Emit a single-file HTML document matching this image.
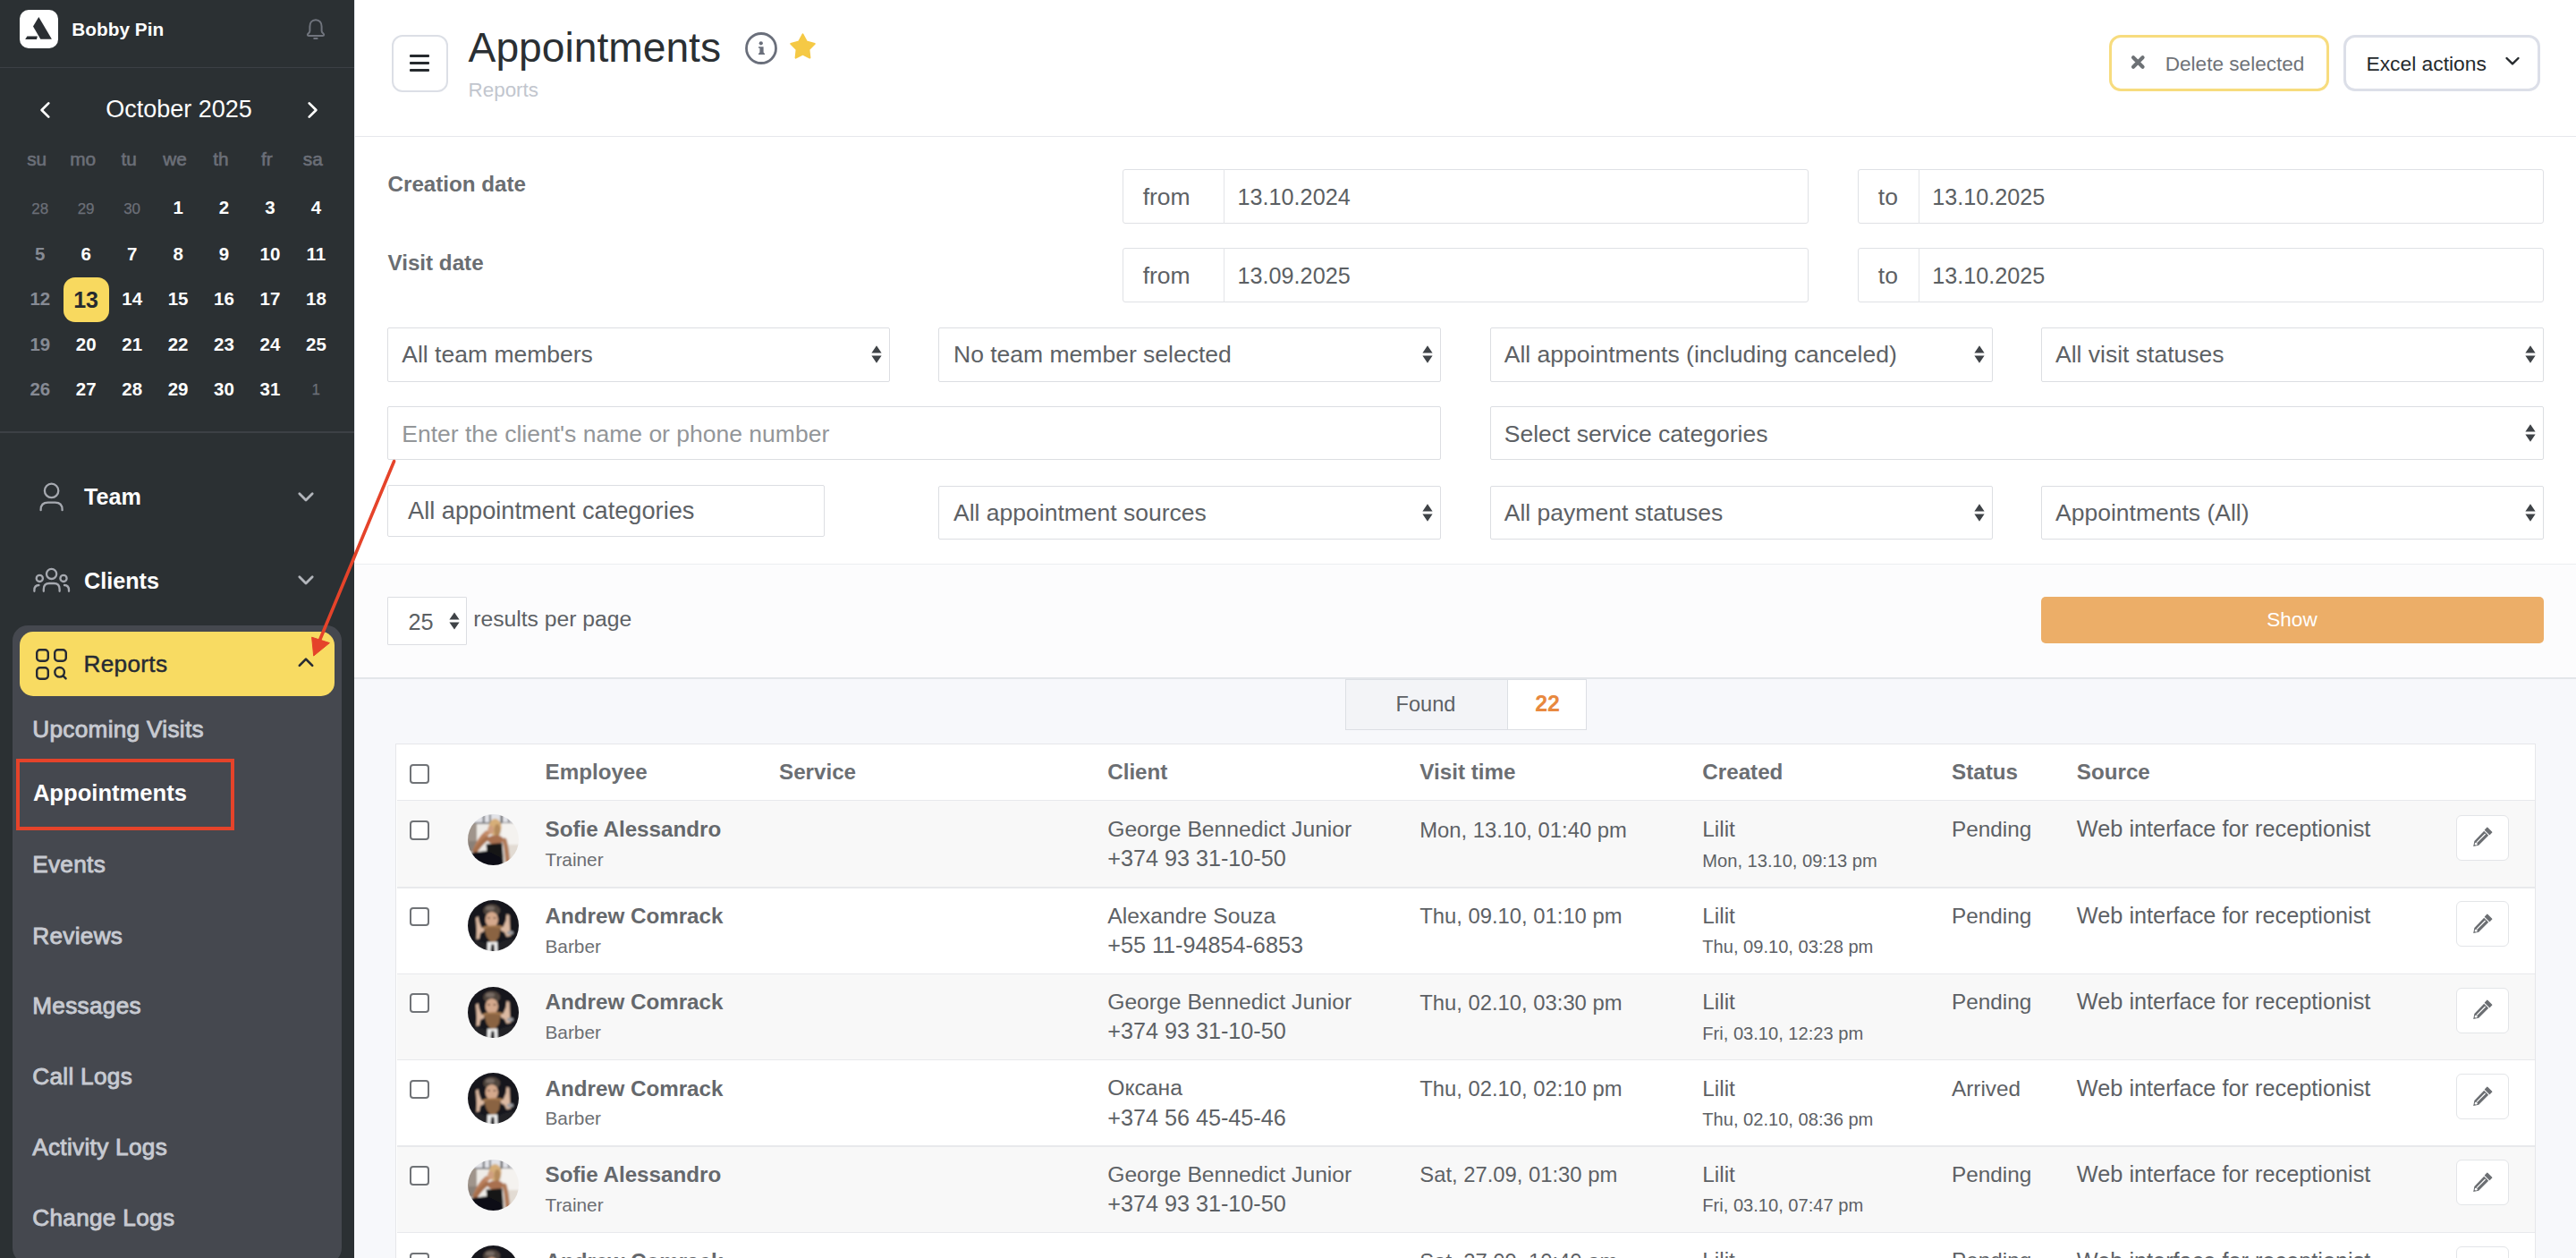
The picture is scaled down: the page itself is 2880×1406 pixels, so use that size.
<!DOCTYPE html>
<html><head><meta charset="utf-8"><title>Appointments</title>
<style>
html,body{margin:0;padding:0;width:2880px;height:1406px;overflow:hidden;background:#fff;}
body{position:relative;font-family:"Liberation Sans",sans-serif;}
.t{position:absolute;line-height:1;white-space:nowrap;}
.b{position:absolute;}

</style></head><body>
<div class="b" style="left:0.0px;top:0.0px;width:396.0px;height:1406.0px;background:#2b3033;"></div>
<div class="b" style="left:22.0px;top:11.0px;width:43.0px;height:43.0px;background:#fff;border-radius:10px;"></div>
<svg class="b" style="left:22px;top:11px" width="43" height="43" viewBox="0 0 43 43"><path d="M21.3 7.9 L35.9 32.8 L23.3 32.8 L15 18.4 Z" fill="#2b2f33"/><path d="M6.2 33 L8.4 29.5 L19.9 29.5 L19 33 Z" fill="#2b2f33"/></svg>
<div class="t" style="left:80.3px;top:23.2px;font-size:20.8px;color:#ffffff;font-weight:700;">Bobby Pin</div>
<svg class="b" style="left:340px;top:18px" width="26" height="30" viewBox="0 0 26 30"><path d="M13 4.3 C8.6 4.3 6.4 7.6 6.4 11.6 L6.4 16.6 C6.4 18 5.6 18.8 4.6 19.6 C3.4 20.6 3.6 21.9 5.2 21.9 L20.8 21.9 C22.4 21.9 22.6 20.6 21.4 19.6 C20.4 18.8 19.6 18 19.6 16.6 L19.6 11.6 C19.6 7.6 17.4 4.3 13 4.3 Z" fill="none" stroke="#70747d" stroke-width="2"/><rect x="10.2" y="24" width="5.4" height="1.9" rx="0.9" fill="#70747d"/></svg>
<div class="b" style="left:0.0px;top:75.0px;width:396.0px;height:1.0px;background:#3c4045;"></div>
<div class="t" style="left:70.0px;width:260px;text-align:center;top:109.3px;font-size:27px;color:#ffffff;">October 2025</div>
<svg class="b" style="left:40px;top:110px" width="22" height="26" viewBox="0 0 22 26"><path d="M14.3 5.4 L6.6 13 L14.3 20.6" fill="none" stroke="#fff" stroke-width="2.7" stroke-linecap="round" stroke-linejoin="round"/></svg>
<svg class="b" style="left:338px;top:110px" width="22" height="26" viewBox="0 0 22 26"><path d="M7.7 5.4 L15.4 13 L7.7 20.6" fill="none" stroke="#fff" stroke-width="2.7" stroke-linecap="round" stroke-linejoin="round"/></svg>
<div class="t" style="left:16.2px;width:50px;text-align:center;top:168.2px;font-size:20.8px;color:#6b6f78;-webkit-text-stroke:0.6px #6b6f78;">su</div>
<div class="t" style="left:67.6px;width:50px;text-align:center;top:168.2px;font-size:20.8px;color:#6b6f78;-webkit-text-stroke:0.6px #6b6f78;">mo</div>
<div class="t" style="left:119.1px;width:50px;text-align:center;top:168.2px;font-size:20.8px;color:#6b6f78;-webkit-text-stroke:0.6px #6b6f78;">tu</div>
<div class="t" style="left:170.5px;width:50px;text-align:center;top:168.2px;font-size:20.8px;color:#6b6f78;-webkit-text-stroke:0.6px #6b6f78;">we</div>
<div class="t" style="left:221.9px;width:50px;text-align:center;top:168.2px;font-size:20.8px;color:#6b6f78;-webkit-text-stroke:0.6px #6b6f78;">th</div>
<div class="t" style="left:273.3px;width:50px;text-align:center;top:168.2px;font-size:20.8px;color:#6b6f78;-webkit-text-stroke:0.6px #6b6f78;">fr</div>
<div class="t" style="left:324.8px;width:50px;text-align:center;top:168.2px;font-size:20.8px;color:#6b6f78;-webkit-text-stroke:0.6px #6b6f78;">sa</div>
<div class="t" style="left:19.7px;width:50px;text-align:center;top:224.6px;font-size:17px;color:#6b6f78;-webkit-text-stroke:0.25px #6b6f78;">28</div>
<div class="t" style="left:71.1px;width:50px;text-align:center;top:224.6px;font-size:17px;color:#6b6f78;-webkit-text-stroke:0.25px #6b6f78;">29</div>
<div class="t" style="left:122.6px;width:50px;text-align:center;top:224.6px;font-size:17px;color:#6b6f78;-webkit-text-stroke:0.25px #6b6f78;">30</div>
<div class="t" style="left:174.1px;width:50px;text-align:center;top:222.1px;font-size:20.5px;color:#ffffff;font-weight:700;">1</div>
<div class="t" style="left:225.5px;width:50px;text-align:center;top:222.1px;font-size:20.5px;color:#ffffff;font-weight:700;">2</div>
<div class="t" style="left:276.9px;width:50px;text-align:center;top:222.1px;font-size:20.5px;color:#ffffff;font-weight:700;">3</div>
<div class="t" style="left:328.4px;width:50px;text-align:center;top:222.1px;font-size:20.5px;color:#ffffff;font-weight:700;">4</div>
<div class="t" style="left:19.8px;width:50px;text-align:center;top:273.8px;font-size:20.5px;color:#868a94;font-weight:700;">5</div>
<div class="t" style="left:71.2px;width:50px;text-align:center;top:273.8px;font-size:20.5px;color:#ffffff;font-weight:700;">6</div>
<div class="t" style="left:122.7px;width:50px;text-align:center;top:273.8px;font-size:20.5px;color:#ffffff;font-weight:700;">7</div>
<div class="t" style="left:174.1px;width:50px;text-align:center;top:273.8px;font-size:20.5px;color:#ffffff;font-weight:700;">8</div>
<div class="t" style="left:225.5px;width:50px;text-align:center;top:273.8px;font-size:20.5px;color:#ffffff;font-weight:700;">9</div>
<div class="t" style="left:276.9px;width:50px;text-align:center;top:273.8px;font-size:20.5px;color:#ffffff;font-weight:700;">10</div>
<div class="t" style="left:328.4px;width:50px;text-align:center;top:273.8px;font-size:20.5px;color:#ffffff;font-weight:700;">11</div>
<div class="t" style="left:19.8px;width:50px;text-align:center;top:323.6px;font-size:20.5px;color:#868a94;font-weight:700;">12</div>
<div class="b" style="left:71.0px;top:310.0px;width:51.0px;height:50.0px;background:#f8d95f;border-radius:13px;"></div>
<div class="t" style="left:71.1px;width:50px;text-align:center;top:322.8px;font-size:25px;color:#262a2e;font-weight:700;">13</div>
<div class="t" style="left:122.7px;width:50px;text-align:center;top:323.6px;font-size:20.5px;color:#ffffff;font-weight:700;">14</div>
<div class="t" style="left:174.1px;width:50px;text-align:center;top:323.6px;font-size:20.5px;color:#ffffff;font-weight:700;">15</div>
<div class="t" style="left:225.5px;width:50px;text-align:center;top:323.6px;font-size:20.5px;color:#ffffff;font-weight:700;">16</div>
<div class="t" style="left:276.9px;width:50px;text-align:center;top:323.6px;font-size:20.5px;color:#ffffff;font-weight:700;">17</div>
<div class="t" style="left:328.4px;width:50px;text-align:center;top:323.6px;font-size:20.5px;color:#ffffff;font-weight:700;">18</div>
<div class="t" style="left:19.8px;width:50px;text-align:center;top:374.8px;font-size:20.5px;color:#868a94;font-weight:700;">19</div>
<div class="t" style="left:71.2px;width:50px;text-align:center;top:374.8px;font-size:20.5px;color:#ffffff;font-weight:700;">20</div>
<div class="t" style="left:122.7px;width:50px;text-align:center;top:374.8px;font-size:20.5px;color:#ffffff;font-weight:700;">21</div>
<div class="t" style="left:174.1px;width:50px;text-align:center;top:374.8px;font-size:20.5px;color:#ffffff;font-weight:700;">22</div>
<div class="t" style="left:225.5px;width:50px;text-align:center;top:374.8px;font-size:20.5px;color:#ffffff;font-weight:700;">23</div>
<div class="t" style="left:276.9px;width:50px;text-align:center;top:374.8px;font-size:20.5px;color:#ffffff;font-weight:700;">24</div>
<div class="t" style="left:328.4px;width:50px;text-align:center;top:374.8px;font-size:20.5px;color:#ffffff;font-weight:700;">25</div>
<div class="t" style="left:19.8px;width:50px;text-align:center;top:424.6px;font-size:20.5px;color:#868a94;font-weight:700;">26</div>
<div class="t" style="left:71.2px;width:50px;text-align:center;top:424.6px;font-size:20.5px;color:#ffffff;font-weight:700;">27</div>
<div class="t" style="left:122.7px;width:50px;text-align:center;top:424.6px;font-size:20.5px;color:#ffffff;font-weight:700;">28</div>
<div class="t" style="left:174.1px;width:50px;text-align:center;top:424.6px;font-size:20.5px;color:#ffffff;font-weight:700;">29</div>
<div class="t" style="left:225.5px;width:50px;text-align:center;top:424.6px;font-size:20.5px;color:#ffffff;font-weight:700;">30</div>
<div class="t" style="left:276.9px;width:50px;text-align:center;top:424.6px;font-size:20.5px;color:#ffffff;font-weight:700;">31</div>
<div class="t" style="left:328.3px;width:50px;text-align:center;top:427.1px;font-size:17px;color:#6b6f78;-webkit-text-stroke:0.25px #6b6f78;">1</div>
<div class="b" style="left:0.0px;top:482.0px;width:396.0px;height:1.5px;background:#3c4045;"></div>
<svg class="b" style="left:40px;top:536px" width="36" height="38" viewBox="0 0 36 38"><circle cx="17.6" cy="12.4" r="7.7" fill="none" stroke="#a6a9b0" stroke-width="2.3"/><path d="M5.6 34.2 L5.6 33.6 C5.6 28.6 8.6 25.6 13.6 25.6 L21.6 25.6 C26.6 25.6 29.6 28.6 29.6 33.6 L29.6 34.2" fill="none" stroke="#a6a9b0" stroke-width="2.3" stroke-linecap="round"/></svg>
<div class="t" style="left:94.0px;top:542.7px;font-size:25.2px;color:#ffffff;font-weight:700;">Team</div>
<svg class="b" style="left:331px;top:547px" width="22" height="16" viewBox="0 0 22 16"><path d="M3.8 4.8 L11 12 L18.2 4.8" fill="none" stroke="#b2b5bb" stroke-width="2.8" stroke-linecap="round" stroke-linejoin="round"/></svg>
<svg class="b" style="left:34px;top:630px" width="48" height="36" viewBox="0 0 48 36"><circle cx="23.6" cy="11.4" r="5.6" fill="none" stroke="#a6a9b0" stroke-width="2.3"/><circle cx="10.3" cy="16.4" r="3.6" fill="none" stroke="#a6a9b0" stroke-width="2.3"/><circle cx="37" cy="16.4" r="3.6" fill="none" stroke="#a6a9b0" stroke-width="2.3"/><path d="M14.8 30.8 L14.8 28.6 C14.8 24.6 17 22 21 22 L26.4 22 C30.4 22 32.6 24.6 32.6 28.6 L32.6 30.8" fill="none" stroke="#a6a9b0" stroke-width="2.3" stroke-linecap="round"/><path d="M4.4 30.8 L4.4 29.4 C4.4 26.4 6 24.2 9.4 24" fill="none" stroke="#a6a9b0" stroke-width="2.3" stroke-linecap="round"/><path d="M43 30.8 L43 29.4 C43 26.4 41.4 24.2 38 24" fill="none" stroke="#a6a9b0" stroke-width="2.3" stroke-linecap="round"/></svg>
<div class="t" style="left:94.0px;top:637.3px;font-size:25.2px;color:#ffffff;font-weight:700;">Clients</div>
<svg class="b" style="left:331px;top:640px" width="22" height="16" viewBox="0 0 22 16"><path d="M3.8 4.8 L11 12 L18.2 4.8" fill="none" stroke="#b2b5bb" stroke-width="2.8" stroke-linecap="round" stroke-linejoin="round"/></svg>
<div class="b" style="left:14.0px;top:699.0px;width:368.0px;height:713.0px;background:#45484f;border-radius:17px;"></div>
<div class="b" style="left:22.0px;top:706.0px;width:352.0px;height:72.0px;background:#f8db62;border-radius:15px;"></div>
<svg class="b" style="left:36px;top:721px" width="44" height="44" viewBox="0 0 44 44"><rect x="5.2" y="5.2" width="12.6" height="12.6" rx="3.6" fill="none" stroke="#262a33" stroke-width="2.4"/><rect x="25.2" y="5.2" width="12.6" height="12.6" rx="3.6" fill="none" stroke="#262a33" stroke-width="2.4"/><rect x="5.2" y="25.2" width="12.6" height="12.6" rx="3.6" fill="none" stroke="#262a33" stroke-width="2.4"/><circle cx="30.6" cy="30.3" r="5.3" fill="none" stroke="#262a33" stroke-width="2.4"/><path d="M34.6 34.4 L37.6 37.4" stroke="#262a33" stroke-width="2.4" stroke-linecap="round"/></svg>
<div class="t" style="left:93.5px;top:729.2px;font-size:26.2px;color:#262a33;-webkit-text-stroke:0.45px #262a33;letter-spacing:0.3px;">Reports</div>
<svg class="b" style="left:331px;top:732px" width="22" height="16" viewBox="0 0 22 16"><path d="M3.8 11.8 L11 4.6 L18.2 11.8" fill="none" stroke="#262a33" stroke-width="2.6" stroke-linecap="round" stroke-linejoin="round"/></svg>
<div class="t" style="left:36.2px;top:801.5px;font-size:26.2px;color:#c7cad1;-webkit-text-stroke:0.9px #c7cad1;letter-spacing:0.3px;">Upcoming Visits</div>
<div class="t" style="left:36.9px;top:874.3px;font-size:25.6px;color:#ffffff;font-weight:700;">Appointments</div>
<div class="t" style="left:36.2px;top:952.9px;font-size:26.2px;color:#c7cad1;-webkit-text-stroke:0.9px #c7cad1;letter-spacing:0.3px;">Events</div>
<div class="t" style="left:36.2px;top:1032.5px;font-size:26.2px;color:#c7cad1;-webkit-text-stroke:0.9px #c7cad1;letter-spacing:0.3px;">Reviews</div>
<div class="t" style="left:36.2px;top:1111.4px;font-size:26.2px;color:#c7cad1;-webkit-text-stroke:0.9px #c7cad1;letter-spacing:0.3px;">Messages</div>
<div class="t" style="left:36.2px;top:1190.2px;font-size:26.2px;color:#c7cad1;-webkit-text-stroke:0.9px #c7cad1;letter-spacing:0.3px;">Call Logs</div>
<div class="t" style="left:36.2px;top:1269.2px;font-size:26.2px;color:#c7cad1;-webkit-text-stroke:0.9px #c7cad1;letter-spacing:0.3px;">Activity Logs</div>
<div class="t" style="left:36.2px;top:1347.6px;font-size:26.2px;color:#c7cad1;-webkit-text-stroke:0.9px #c7cad1;letter-spacing:0.3px;">Change Logs</div>
<div class="b" style="left:18.0px;top:848.0px;width:244.0px;height:80.0px;border:4px solid #e5432a;box-sizing:border-box;"></div>
<div class="b" style="left:396.0px;top:0.0px;width:2484.0px;height:1406.0px;background:#ffffff;"></div>
<div class="b" style="left:396.0px;top:0.0px;width:1.0px;height:1406.0px;background:#e6e8ee;"></div>
<div class="b" style="left:437.5px;top:39.0px;width:63.5px;height:63.5px;border:2px solid #dcdfe6;border-radius:12px;box-sizing:border-box;"></div>
<div class="b" style="left:457.7px;top:61.2px;width:22.6px;height:3.2px;background:#262a2e;border-radius:1px;"></div>
<div class="b" style="left:457.7px;top:69.2px;width:22.6px;height:3.2px;background:#262a2e;border-radius:1px;"></div>
<div class="b" style="left:457.7px;top:77.2px;width:22.6px;height:3.2px;background:#262a2e;border-radius:1px;"></div>
<div class="t" style="left:523.6px;top:30.3px;font-size:46.2px;color:#2a2f33;">Appointments</div>
<svg class="b" style="left:831px;top:34px" width="40" height="40" viewBox="0 0 40 40"><circle cx="20" cy="20" r="16.5" fill="none" stroke="#6a6f7b" stroke-width="2.8"/><circle cx="19.8" cy="14.3" r="2.1" fill="#6a6f7b"/><path d="M17 18.3 L22.6 18.3 L22.6 24.6 L24 26 L24 27 L17 27 L17 26 L18.4 24.6 L18.4 19.8 L17 19.8 Z" fill="#6a6f7b"/></svg>
<svg class="b" style="left:881px;top:35px" width="33" height="33" viewBox="0 0 33 33"><path d="M16.5 3.4 L20.8 11.4 L29.8 13.9 L23.4 20.4 L24.4 29.6 L16.5 25.6 L8.6 29.6 L9.6 20.4 L3.2 13.9 L12.2 11.4 Z" fill="#f5c945" stroke="#f5c945" stroke-width="2" stroke-linejoin="round"/></svg>
<div class="t" style="left:523.6px;top:89.6px;font-size:22.4px;color:#c2c6ce;">Reports</div>
<div class="b" style="left:2358.4px;top:39.2px;width:245.9px;height:63.0px;border:3px solid #f7dc7e;border-radius:13px;box-sizing:border-box;"></div>
<svg class="b" style="left:2381px;top:61px" width="19" height="19" viewBox="0 0 19 19"><path d="M4.05 3.35 L14.55 13.85 M14.55 3.35 L4.05 13.85" stroke="#6d7175" stroke-width="4.2" stroke-linecap="round"/></svg>
<div class="t" style="left:2420.7px;top:60.5px;font-size:22.6px;color:#6f7378;">Delete selected</div>
<div class="b" style="left:2620.3px;top:39.2px;width:219.5px;height:63.0px;border:3px solid #dcdfe8;border-radius:13px;box-sizing:border-box;"></div>
<div class="t" style="left:2645.5px;top:60.3px;font-size:22.8px;color:#25292c;">Excel actions</div>
<svg class="b" style="left:2799px;top:60px" width="20" height="16" viewBox="0 0 20 16"><path d="M3.5 5 L10 11.4 L16.5 5" fill="none" stroke="#25292c" stroke-width="2.4" stroke-linecap="round" stroke-linejoin="round"/></svg>
<div class="b" style="left:396.0px;top:152.0px;width:2484.0px;height:1.0px;background:#e6e8ec;"></div>
<div class="t" style="left:433.5px;top:193.7px;font-size:24.2px;color:#6a6d71;font-weight:700;">Creation date</div>
<div class="t" style="left:433.5px;top:281.5px;font-size:24.2px;color:#6a6d71;font-weight:700;">Visit date</div>
<div class="b" style="left:1255.0px;top:189.0px;width:767.0px;height:61.0px;border:1px solid #dfe1e5;border-radius:3px;box-sizing:border-box;"></div>
<div class="b" style="left:1368.0px;top:189.0px;width:1.0px;height:61.0px;background:#e3e5e8;"></div>
<div class="t" style="left:1277.7px;top:206.6px;font-size:26.5px;color:#5d6165;">from</div>
<div class="t" style="left:1383.6px;top:207.7px;font-size:25.2px;color:#5b5f63;">13.10.2024</div>
<div class="b" style="left:2076.5px;top:189.0px;width:767.5px;height:61.0px;border:1px solid #dfe1e5;border-radius:3px;box-sizing:border-box;"></div>
<div class="b" style="left:2145.0px;top:189.0px;width:1.0px;height:61.0px;background:#e3e5e8;"></div>
<div class="t" style="left:2099.8px;top:206.6px;font-size:26.5px;color:#5d6165;">to</div>
<div class="t" style="left:2160.3px;top:207.7px;font-size:25.2px;color:#5b5f63;">13.10.2025</div>
<div class="b" style="left:1255.0px;top:277.0px;width:767.0px;height:61.0px;border:1px solid #dfe1e5;border-radius:3px;box-sizing:border-box;"></div>
<div class="b" style="left:1368.0px;top:277.0px;width:1.0px;height:61.0px;background:#e3e5e8;"></div>
<div class="t" style="left:1277.7px;top:294.6px;font-size:26.5px;color:#5d6165;">from</div>
<div class="t" style="left:1383.6px;top:295.7px;font-size:25.2px;color:#5b5f63;">13.09.2025</div>
<div class="b" style="left:2076.5px;top:277.0px;width:767.5px;height:61.0px;border:1px solid #dfe1e5;border-radius:3px;box-sizing:border-box;"></div>
<div class="b" style="left:2145.0px;top:277.0px;width:1.0px;height:61.0px;background:#e3e5e8;"></div>
<div class="t" style="left:2099.8px;top:294.6px;font-size:26.5px;color:#5d6165;">to</div>
<div class="t" style="left:2160.3px;top:295.7px;font-size:25.2px;color:#5b5f63;">13.10.2025</div>
<div class="b" style="left:433.0px;top:365.5px;width:562.0px;height:61.1px;border:1px solid #dcdee2;border-radius:2px;box-sizing:border-box;"></div>
<div class="t" style="left:449.3px;top:383.3px;font-size:26.5px;color:#5d6165;">All team members</div>
<svg class="b" style="left:972.5px;top:384.1px" width="14" height="24" viewBox="0 0 14 24"><path d="M7 2.3 L12.6 10.6 L1.4 10.6 Z M7 21.7 L12.6 13.4 L1.4 13.4 Z" fill="#3f4347"/></svg>
<div class="b" style="left:1049.4px;top:365.5px;width:562.0px;height:61.1px;border:1px solid #dcdee2;border-radius:2px;box-sizing:border-box;"></div>
<div class="t" style="left:1066.0px;top:383.3px;font-size:26.5px;color:#5d6165;">No team member selected</div>
<svg class="b" style="left:1588.9px;top:384.1px" width="14" height="24" viewBox="0 0 14 24"><path d="M7 2.3 L12.6 10.6 L1.4 10.6 Z M7 21.7 L12.6 13.4 L1.4 13.4 Z" fill="#3f4347"/></svg>
<div class="b" style="left:1666.4px;top:365.5px;width:562.0px;height:61.1px;border:1px solid #dcdee2;border-radius:2px;box-sizing:border-box;"></div>
<div class="t" style="left:1681.8px;top:383.3px;font-size:26.5px;color:#5d6165;">All appointments (including canceled)</div>
<svg class="b" style="left:2205.9px;top:384.1px" width="14" height="24" viewBox="0 0 14 24"><path d="M7 2.3 L12.6 10.6 L1.4 10.6 Z M7 21.7 L12.6 13.4 L1.4 13.4 Z" fill="#3f4347"/></svg>
<div class="b" style="left:2282.4px;top:365.5px;width:562.0px;height:61.1px;border:1px solid #dcdee2;border-radius:2px;box-sizing:border-box;"></div>
<div class="t" style="left:2298.0px;top:383.3px;font-size:26.5px;color:#5d6165;">All visit statuses</div>
<svg class="b" style="left:2821.9px;top:384.1px" width="14" height="24" viewBox="0 0 14 24"><path d="M7 2.3 L12.6 10.6 L1.4 10.6 Z M7 21.7 L12.6 13.4 L1.4 13.4 Z" fill="#3f4347"/></svg>
<div class="b" style="left:433.0px;top:454.3px;width:1178.4px;height:60.2px;border:1px solid #dcdee2;border-radius:2px;box-sizing:border-box;"></div>
<div class="t" style="left:449.3px;top:472.1px;font-size:26.5px;color:#939699;">Enter the client's name or phone number</div>
<div class="b" style="left:1666.4px;top:454.3px;width:1178.0px;height:60.2px;border:1px solid #dcdee2;border-radius:2px;box-sizing:border-box;"></div>
<div class="t" style="left:1681.8px;top:472.1px;font-size:26.5px;color:#5d6165;">Select service categories</div>
<svg class="b" style="left:2821.9px;top:472.4px" width="14" height="24" viewBox="0 0 14 24"><path d="M7 2.3 L12.6 10.6 L1.4 10.6 Z M7 21.7 L12.6 13.4 L1.4 13.4 Z" fill="#3f4347"/></svg>
<div class="b" style="left:433.0px;top:542.0px;width:489.2px;height:58.0px;border:1px solid #dcdee2;border-radius:2px;box-sizing:border-box;"></div>
<div class="t" style="left:456.0px;top:557.2px;font-size:27.2px;color:#5d6165;">All appointment categories</div>
<div class="b" style="left:1049.4px;top:542.5px;width:562.0px;height:60.0px;border:1px solid #dcdee2;border-radius:2px;box-sizing:border-box;"></div>
<div class="t" style="left:1066.0px;top:560.3px;font-size:26.5px;color:#5d6165;">All appointment sources</div>
<svg class="b" style="left:1588.9px;top:560.5px" width="14" height="24" viewBox="0 0 14 24"><path d="M7 2.3 L12.6 10.6 L1.4 10.6 Z M7 21.7 L12.6 13.4 L1.4 13.4 Z" fill="#3f4347"/></svg>
<div class="b" style="left:1666.4px;top:542.5px;width:562.0px;height:60.0px;border:1px solid #dcdee2;border-radius:2px;box-sizing:border-box;"></div>
<div class="t" style="left:1681.8px;top:560.3px;font-size:26.5px;color:#5d6165;">All payment statuses</div>
<svg class="b" style="left:2205.9px;top:560.5px" width="14" height="24" viewBox="0 0 14 24"><path d="M7 2.3 L12.6 10.6 L1.4 10.6 Z M7 21.7 L12.6 13.4 L1.4 13.4 Z" fill="#3f4347"/></svg>
<div class="b" style="left:2282.4px;top:542.5px;width:562.0px;height:60.0px;border:1px solid #dcdee2;border-radius:2px;box-sizing:border-box;"></div>
<div class="t" style="left:2298.0px;top:560.3px;font-size:26.5px;color:#5d6165;">Appointments (All)</div>
<svg class="b" style="left:2821.9px;top:560.5px" width="14" height="24" viewBox="0 0 14 24"><path d="M7 2.3 L12.6 10.6 L1.4 10.6 Z M7 21.7 L12.6 13.4 L1.4 13.4 Z" fill="#3f4347"/></svg>
<div class="b" style="left:396.0px;top:630.0px;width:2484.0px;height:127.0px;background:#fcfcfd;"></div>
<div class="b" style="left:396.0px;top:629.5px;width:2484.0px;height:1.5px;background:#eceef1;"></div>
<div class="b" style="left:433.0px;top:667.0px;width:89.0px;height:54.0px;background:#fff;border:1px solid #dcdee2;border-radius:1px;box-sizing:border-box;"></div>
<div class="t" style="left:456.5px;top:682.6px;font-size:25.3px;color:#5b5f63;">25</div>
<svg class="b" style="left:501px;top:682px" width="14" height="24" viewBox="0 0 14 24"><path d="M7 2.5 L12.6 10.4 L1.4 10.4 Z M7 21.5 L12.6 13.6 L1.4 13.6 Z" fill="#3f4347"/></svg>
<div class="t" style="left:529.2px;top:679.9px;font-size:24.7px;color:#5d6165;">results per page</div>
<div class="b" style="left:2281.6px;top:667.2px;width:562.4px;height:51.6px;background:#ecae68;border-radius:5px;"></div>
<div class="t" style="left:2462.5px;width:200px;text-align:center;top:682.1px;font-size:22.6px;color:#ffffff;">Show</div>
<div class="b" style="left:396.0px;top:757.0px;width:2484.0px;height:649.0px;background:#f7f8fb;"></div>
<div class="b" style="left:396.0px;top:756.5px;width:2484.0px;height:2.0px;background:#e3e6ea;"></div>
<div class="b" style="left:1504.0px;top:759.0px;width:270.0px;height:57.0px;background:#fff;border:1px solid #dcdfe4;box-sizing:border-box;"></div>
<div class="b" style="left:1505.0px;top:760.0px;width:179.5px;height:55.0px;background:#f3f4f7;"></div>
<div class="b" style="left:1684.5px;top:760.0px;width:1.0px;height:55.0px;background:#dcdfe4;"></div>
<div class="t" style="left:1560.5px;top:776.2px;font-size:23.6px;color:#5d6165;">Found</div>
<div class="t" style="left:1716.2px;top:773.9px;font-size:25px;color:#e8893f;font-weight:700;">22</div>
<div class="b" style="left:442.4px;top:831.0px;width:2392.9px;height:575.0px;background:#fff;border:1.5px solid #e6e7ea;border-bottom:none;box-sizing:border-box;"></div>
<div class="b" style="left:458.0px;top:854.0px;width:21.5px;height:21.5px;border:2px solid #707377;border-radius:4px;box-sizing:border-box;background:#fff;"></div>
<div class="t" style="left:609.5px;top:850.7px;font-size:24.2px;color:#6b6e72;font-weight:700;">Employee</div>
<div class="t" style="left:871.0px;top:850.7px;font-size:24.2px;color:#6b6e72;font-weight:700;">Service</div>
<div class="t" style="left:1238.2px;top:850.7px;font-size:24.2px;color:#6b6e72;font-weight:700;">Client</div>
<div class="t" style="left:1587.3px;top:850.7px;font-size:24.2px;color:#6b6e72;font-weight:700;">Visit time</div>
<div class="t" style="left:1903.3px;top:850.7px;font-size:24.2px;color:#6b6e72;font-weight:700;">Created</div>
<div class="t" style="left:2182.0px;top:850.7px;font-size:24.2px;color:#6b6e72;font-weight:700;">Status</div>
<div class="t" style="left:2321.8px;top:850.7px;font-size:24.2px;color:#6b6e72;font-weight:700;">Source</div>
<div class="b" style="left:443.9px;top:893.8px;width:2389.9px;height:1.5px;background:#e8e9ec;"></div>
<div class="b" style="left:443.9px;top:895.3px;width:2389.9px;height:96.6px;background:#f8f8f8;"></div>
<div class="b" style="left:458.0px;top:917.3px;width:21.5px;height:21.5px;border:2px solid #707377;border-radius:4px;box-sizing:border-box;background:#fff;"></div>
<svg class="b" style="left:523px;top:909.8px" width="57" height="57" viewBox="0 0 57 57"><defs><clipPath id="c0"><circle cx="28.5" cy="28.5" r="28.5"/></clipPath><filter id="f0" x="-20%" y="-20%" width="140%" height="140%"><feGaussianBlur stdDeviation="0.9"/></filter></defs><g clip-path="url(#c0)"><g filter="url(#f0)"><rect x="-5" y="-5" width="67" height="67" fill="#eeebe7"/><rect x="-5" y="-5" width="67" height="15" fill="#e2e3e8"/><rect x="16.8" y="0" width="1.8" height="10" fill="#505158"/><rect x="24" y="0" width="1.6" height="10" fill="#5a5b60"/><rect x="36.8" y="0" width="2.2" height="10" fill="#3c3d42"/><rect x="45" y="0" width="1.6" height="10" fill="#6a6b70"/><rect x="-5" y="9" width="67" height="1.8" fill="#77777b"/><rect x="-5" y="10" width="15" height="28" fill="#9f948b"/><rect x="-5" y="30" width="15" height="12" fill="#8a8078"/><rect x="38" y="10" width="24" height="26" fill="#f4f2ef"/><rect x="40" y="34" width="22" height="25" fill="#e2dbd3"/><ellipse cx="30.5" cy="14.5" rx="7" ry="9.5" fill="#d6ae78"/><ellipse cx="33" cy="18" rx="3.5" ry="7" fill="#b48a5c"/><ellipse cx="25.6" cy="17.5" rx="3.4" ry="5" fill="#cf9f7f"/><path d="M8 41 C11 33 15 26 21 21" fill="none" stroke="#b97f5b" stroke-width="5" stroke-linecap="round"/><path d="M8.5 41 C12 36 16 31 21.5 27" fill="none" stroke="#a66e4c" stroke-width="5" stroke-linecap="round"/><ellipse cx="21.5" cy="21.5" rx="3" ry="2.6" fill="#c48d6a"/><ellipse cx="31" cy="28.6" rx="9" ry="5" fill="#a87050"/><path d="M41 29 C43 36 44 45 44.5 53" fill="none" stroke="#b07a58" stroke-width="5" stroke-linecap="round"/><path d="M20.6 33.4 L38.5 32.2 L39.7 49.5 L21.8 50 Z" fill="#141417"/><path d="M4 43 L21.8 41 L39.7 50 L40 60 L-2 60 Z" fill="#0f0f12"/></g></g></svg>
<div class="t" style="left:609.5px;top:915.3px;font-size:24.2px;color:#65686c;font-weight:700;">Sofie Alessandro</div>
<div class="t" style="left:609.5px;top:950.9px;font-size:20.8px;color:#6b6e72;">Trainer</div>
<div class="t" style="left:1238.2px;top:914.9px;font-size:24.7px;color:#5d6165;">George Bennedict Junior</div>
<div class="t" style="left:1238.2px;top:947.2px;font-size:25.2px;color:#5d6165;">+374 93 31-10-50</div>
<div class="t" style="left:1587.3px;top:915.6px;font-size:23.8px;color:#5d6165;">Mon, 13.10, 01:40 pm</div>
<div class="t" style="left:1903.3px;top:915.1px;font-size:24.4px;color:#5d6165;">Lilit</div>
<div class="t" style="left:1903.3px;top:951.5px;font-size:20.1px;color:#5d6165;">Mon, 13.10, 09:13 pm</div>
<div class="t" style="left:2182.0px;top:915.2px;font-size:24.3px;color:#5d6165;">Pending</div>
<div class="t" style="left:2321.8px;top:914.4px;font-size:25.3px;color:#5d6165;">Web interface for receptionist</div>
<div class="b" style="left:2745.6px;top:910.5px;width:59.7px;height:51.2px;background:#fff;border:1.5px solid #e3e5e8;border-radius:6px;box-sizing:border-box;"></div>
<svg class="b" style="left:2763px;top:922.1px" width="26" height="26" viewBox="0 0 26 26"><path d="M17.8 3.2 L22.8 8.2 L20.4 10.6 L15.4 5.6 Z" fill="#6b6e72" stroke="#6b6e72" stroke-width="1.2" stroke-linejoin="round"/><path d="M14.2 6.8 L19.2 11.8 L8.2 22.8 L2.2 24 L3.4 18 Z" fill="#6b6e72"/><path d="M6 19.6 L15.6 10" stroke="#fff" stroke-width="1.2"/><circle cx="5.2" cy="21.2" r="1.4" fill="#fff"/></svg>
<div class="b" style="left:443.9px;top:991.9px;width:2389.9px;height:96.4px;background:#ffffff;"></div>
<div class="b" style="left:458.0px;top:1013.9px;width:21.5px;height:21.5px;border:2px solid #707377;border-radius:4px;box-sizing:border-box;background:#fff;"></div>
<svg class="b" style="left:523px;top:1006.4px" width="57" height="57" viewBox="0 0 57 57"><defs><clipPath id="c1"><circle cx="28.5" cy="28.5" r="28.5"/></clipPath><filter id="f1" x="-20%" y="-20%" width="140%" height="140%"><feGaussianBlur stdDeviation="0.9"/></filter></defs><g clip-path="url(#c1)"><g filter="url(#f1)"><rect x="-5" y="-5" width="67" height="67" fill="#15161b"/><ellipse cx="26.8" cy="11.5" rx="9.5" ry="6.8" fill="#4f443c"/><ellipse cx="25" cy="9" rx="5" ry="2.6" fill="#786c64"/><ellipse cx="26.8" cy="21.8" rx="7.2" ry="8.8" fill="#d4a88c"/><ellipse cx="23.5" cy="20" rx="1.4" ry="0.8" fill="#3a2a22"/><ellipse cx="30" cy="20" rx="1.4" ry="0.8" fill="#3a2a22"/><path d="M9 20 L11.5 18 L13 25 L15.5 31 L19 31 L18 35 L14 37 L13 43 L9.5 44 L10 34 Z" fill="#dcb9a2"/><path d="M46.5 17 L43.5 15.5 L42.5 23 L39.5 30 L36 30 L37 34 L41 36 L43.5 41 L48 40 L47 31 Z" fill="#dcb9a2"/><path d="M17.8 30.5 L37 29.8 L35 41 L29.5 48.5 L27 49 L21 41 Z" fill="#8a6442"/><path d="M17 31 C22 29 32 28.6 38.5 30" fill="none" stroke="#a87a50" stroke-width="2.2"/><path d="M22 47 L33 46.5 L34 60 L21 60 Z" fill="#f0f0f0"/><path d="M26.2 49.5 L29.4 49.5 L30.4 60 L25.2 60 Z" fill="#15161b"/><path d="M-2 47 C6 44 14 44 21.5 49 L21.5 60 L-2 60 Z" fill="#202128"/><path d="M59 45 C52 42 42 43 33.5 48.5 L33.5 60 L59 60 Z" fill="#202128"/><ellipse cx="47.4" cy="36.4" rx="3.6" ry="2.2" fill="#9c9ca0"/></g></g></svg>
<div class="t" style="left:609.5px;top:1011.9px;font-size:24.2px;color:#65686c;font-weight:700;">Andrew Comrack</div>
<div class="t" style="left:609.5px;top:1047.5px;font-size:20.8px;color:#6b6e72;">Barber</div>
<div class="t" style="left:1238.2px;top:1011.5px;font-size:24.7px;color:#5d6165;">Alexandre Souza</div>
<div class="t" style="left:1238.2px;top:1043.8px;font-size:25.2px;color:#5d6165;">+55 11-94854-6853</div>
<div class="t" style="left:1587.3px;top:1012.2px;font-size:23.8px;color:#5d6165;">Thu, 09.10, 01:10 pm</div>
<div class="t" style="left:1903.3px;top:1011.7px;font-size:24.4px;color:#5d6165;">Lilit</div>
<div class="t" style="left:1903.3px;top:1048.1px;font-size:20.1px;color:#5d6165;">Thu, 09.10, 03:28 pm</div>
<div class="t" style="left:2182.0px;top:1011.8px;font-size:24.3px;color:#5d6165;">Pending</div>
<div class="t" style="left:2321.8px;top:1011.0px;font-size:25.3px;color:#5d6165;">Web interface for receptionist</div>
<div class="b" style="left:2745.6px;top:1007.1px;width:59.7px;height:51.2px;background:#fff;border:1.5px solid #e3e5e8;border-radius:6px;box-sizing:border-box;"></div>
<svg class="b" style="left:2763px;top:1018.7px" width="26" height="26" viewBox="0 0 26 26"><path d="M17.8 3.2 L22.8 8.2 L20.4 10.6 L15.4 5.6 Z" fill="#6b6e72" stroke="#6b6e72" stroke-width="1.2" stroke-linejoin="round"/><path d="M14.2 6.8 L19.2 11.8 L8.2 22.8 L2.2 24 L3.4 18 Z" fill="#6b6e72"/><path d="M6 19.6 L15.6 10" stroke="#fff" stroke-width="1.2"/><circle cx="5.2" cy="21.2" r="1.4" fill="#fff"/></svg>
<div class="b" style="left:443.9px;top:1088.3px;width:2389.9px;height:96.4px;background:#f8f8f8;"></div>
<div class="b" style="left:458.0px;top:1110.3px;width:21.5px;height:21.5px;border:2px solid #707377;border-radius:4px;box-sizing:border-box;background:#fff;"></div>
<svg class="b" style="left:523px;top:1102.8px" width="57" height="57" viewBox="0 0 57 57"><defs><clipPath id="c2"><circle cx="28.5" cy="28.5" r="28.5"/></clipPath><filter id="f2" x="-20%" y="-20%" width="140%" height="140%"><feGaussianBlur stdDeviation="0.9"/></filter></defs><g clip-path="url(#c2)"><g filter="url(#f2)"><rect x="-5" y="-5" width="67" height="67" fill="#15161b"/><ellipse cx="26.8" cy="11.5" rx="9.5" ry="6.8" fill="#4f443c"/><ellipse cx="25" cy="9" rx="5" ry="2.6" fill="#786c64"/><ellipse cx="26.8" cy="21.8" rx="7.2" ry="8.8" fill="#d4a88c"/><ellipse cx="23.5" cy="20" rx="1.4" ry="0.8" fill="#3a2a22"/><ellipse cx="30" cy="20" rx="1.4" ry="0.8" fill="#3a2a22"/><path d="M9 20 L11.5 18 L13 25 L15.5 31 L19 31 L18 35 L14 37 L13 43 L9.5 44 L10 34 Z" fill="#dcb9a2"/><path d="M46.5 17 L43.5 15.5 L42.5 23 L39.5 30 L36 30 L37 34 L41 36 L43.5 41 L48 40 L47 31 Z" fill="#dcb9a2"/><path d="M17.8 30.5 L37 29.8 L35 41 L29.5 48.5 L27 49 L21 41 Z" fill="#8a6442"/><path d="M17 31 C22 29 32 28.6 38.5 30" fill="none" stroke="#a87a50" stroke-width="2.2"/><path d="M22 47 L33 46.5 L34 60 L21 60 Z" fill="#f0f0f0"/><path d="M26.2 49.5 L29.4 49.5 L30.4 60 L25.2 60 Z" fill="#15161b"/><path d="M-2 47 C6 44 14 44 21.5 49 L21.5 60 L-2 60 Z" fill="#202128"/><path d="M59 45 C52 42 42 43 33.5 48.5 L33.5 60 L59 60 Z" fill="#202128"/><ellipse cx="47.4" cy="36.4" rx="3.6" ry="2.2" fill="#9c9ca0"/></g></g></svg>
<div class="t" style="left:609.5px;top:1108.3px;font-size:24.2px;color:#65686c;font-weight:700;">Andrew Comrack</div>
<div class="t" style="left:609.5px;top:1143.9px;font-size:20.8px;color:#6b6e72;">Barber</div>
<div class="t" style="left:1238.2px;top:1107.9px;font-size:24.7px;color:#5d6165;">George Bennedict Junior</div>
<div class="t" style="left:1238.2px;top:1140.2px;font-size:25.2px;color:#5d6165;">+374 93 31-10-50</div>
<div class="t" style="left:1587.3px;top:1108.6px;font-size:23.8px;color:#5d6165;">Thu, 02.10, 03:30 pm</div>
<div class="t" style="left:1903.3px;top:1108.1px;font-size:24.4px;color:#5d6165;">Lilit</div>
<div class="t" style="left:1903.3px;top:1144.5px;font-size:20.1px;color:#5d6165;">Fri, 03.10, 12:23 pm</div>
<div class="t" style="left:2182.0px;top:1108.2px;font-size:24.3px;color:#5d6165;">Pending</div>
<div class="t" style="left:2321.8px;top:1107.4px;font-size:25.3px;color:#5d6165;">Web interface for receptionist</div>
<div class="b" style="left:2745.6px;top:1103.5px;width:59.7px;height:51.2px;background:#fff;border:1.5px solid #e3e5e8;border-radius:6px;box-sizing:border-box;"></div>
<svg class="b" style="left:2763px;top:1115.1px" width="26" height="26" viewBox="0 0 26 26"><path d="M17.8 3.2 L22.8 8.2 L20.4 10.6 L15.4 5.6 Z" fill="#6b6e72" stroke="#6b6e72" stroke-width="1.2" stroke-linejoin="round"/><path d="M14.2 6.8 L19.2 11.8 L8.2 22.8 L2.2 24 L3.4 18 Z" fill="#6b6e72"/><path d="M6 19.6 L15.6 10" stroke="#fff" stroke-width="1.2"/><circle cx="5.2" cy="21.2" r="1.4" fill="#fff"/></svg>
<div class="b" style="left:443.9px;top:1184.7px;width:2389.9px;height:96.4px;background:#ffffff;"></div>
<div class="b" style="left:458.0px;top:1206.7px;width:21.5px;height:21.5px;border:2px solid #707377;border-radius:4px;box-sizing:border-box;background:#fff;"></div>
<svg class="b" style="left:523px;top:1199.2px" width="57" height="57" viewBox="0 0 57 57"><defs><clipPath id="c3"><circle cx="28.5" cy="28.5" r="28.5"/></clipPath><filter id="f3" x="-20%" y="-20%" width="140%" height="140%"><feGaussianBlur stdDeviation="0.9"/></filter></defs><g clip-path="url(#c3)"><g filter="url(#f3)"><rect x="-5" y="-5" width="67" height="67" fill="#15161b"/><ellipse cx="26.8" cy="11.5" rx="9.5" ry="6.8" fill="#4f443c"/><ellipse cx="25" cy="9" rx="5" ry="2.6" fill="#786c64"/><ellipse cx="26.8" cy="21.8" rx="7.2" ry="8.8" fill="#d4a88c"/><ellipse cx="23.5" cy="20" rx="1.4" ry="0.8" fill="#3a2a22"/><ellipse cx="30" cy="20" rx="1.4" ry="0.8" fill="#3a2a22"/><path d="M9 20 L11.5 18 L13 25 L15.5 31 L19 31 L18 35 L14 37 L13 43 L9.5 44 L10 34 Z" fill="#dcb9a2"/><path d="M46.5 17 L43.5 15.5 L42.5 23 L39.5 30 L36 30 L37 34 L41 36 L43.5 41 L48 40 L47 31 Z" fill="#dcb9a2"/><path d="M17.8 30.5 L37 29.8 L35 41 L29.5 48.5 L27 49 L21 41 Z" fill="#8a6442"/><path d="M17 31 C22 29 32 28.6 38.5 30" fill="none" stroke="#a87a50" stroke-width="2.2"/><path d="M22 47 L33 46.5 L34 60 L21 60 Z" fill="#f0f0f0"/><path d="M26.2 49.5 L29.4 49.5 L30.4 60 L25.2 60 Z" fill="#15161b"/><path d="M-2 47 C6 44 14 44 21.5 49 L21.5 60 L-2 60 Z" fill="#202128"/><path d="M59 45 C52 42 42 43 33.5 48.5 L33.5 60 L59 60 Z" fill="#202128"/><ellipse cx="47.4" cy="36.4" rx="3.6" ry="2.2" fill="#9c9ca0"/></g></g></svg>
<div class="t" style="left:609.5px;top:1204.7px;font-size:24.2px;color:#65686c;font-weight:700;">Andrew Comrack</div>
<div class="t" style="left:609.5px;top:1240.3px;font-size:20.8px;color:#6b6e72;">Barber</div>
<div class="t" style="left:1238.2px;top:1204.3px;font-size:24.7px;color:#5d6165;">Оксана</div>
<div class="t" style="left:1238.2px;top:1236.6px;font-size:25.2px;color:#5d6165;">+374 56 45-45-46</div>
<div class="t" style="left:1587.3px;top:1205.0px;font-size:23.8px;color:#5d6165;">Thu, 02.10, 02:10 pm</div>
<div class="t" style="left:1903.3px;top:1204.5px;font-size:24.4px;color:#5d6165;">Lilit</div>
<div class="t" style="left:1903.3px;top:1240.9px;font-size:20.1px;color:#5d6165;">Thu, 02.10, 08:36 pm</div>
<div class="t" style="left:2182.0px;top:1204.6px;font-size:24.3px;color:#5d6165;">Arrived</div>
<div class="t" style="left:2321.8px;top:1203.8px;font-size:25.3px;color:#5d6165;">Web interface for receptionist</div>
<div class="b" style="left:2745.6px;top:1199.9px;width:59.7px;height:51.2px;background:#fff;border:1.5px solid #e3e5e8;border-radius:6px;box-sizing:border-box;"></div>
<svg class="b" style="left:2763px;top:1211.5px" width="26" height="26" viewBox="0 0 26 26"><path d="M17.8 3.2 L22.8 8.2 L20.4 10.6 L15.4 5.6 Z" fill="#6b6e72" stroke="#6b6e72" stroke-width="1.2" stroke-linejoin="round"/><path d="M14.2 6.8 L19.2 11.8 L8.2 22.8 L2.2 24 L3.4 18 Z" fill="#6b6e72"/><path d="M6 19.6 L15.6 10" stroke="#fff" stroke-width="1.2"/><circle cx="5.2" cy="21.2" r="1.4" fill="#fff"/></svg>
<div class="b" style="left:443.9px;top:1281.1px;width:2389.9px;height:96.4px;background:#f8f8f8;"></div>
<div class="b" style="left:458.0px;top:1303.1px;width:21.5px;height:21.5px;border:2px solid #707377;border-radius:4px;box-sizing:border-box;background:#fff;"></div>
<svg class="b" style="left:523px;top:1295.6px" width="57" height="57" viewBox="0 0 57 57"><defs><clipPath id="c4"><circle cx="28.5" cy="28.5" r="28.5"/></clipPath><filter id="f4" x="-20%" y="-20%" width="140%" height="140%"><feGaussianBlur stdDeviation="0.9"/></filter></defs><g clip-path="url(#c4)"><g filter="url(#f4)"><rect x="-5" y="-5" width="67" height="67" fill="#eeebe7"/><rect x="-5" y="-5" width="67" height="15" fill="#e2e3e8"/><rect x="16.8" y="0" width="1.8" height="10" fill="#505158"/><rect x="24" y="0" width="1.6" height="10" fill="#5a5b60"/><rect x="36.8" y="0" width="2.2" height="10" fill="#3c3d42"/><rect x="45" y="0" width="1.6" height="10" fill="#6a6b70"/><rect x="-5" y="9" width="67" height="1.8" fill="#77777b"/><rect x="-5" y="10" width="15" height="28" fill="#9f948b"/><rect x="-5" y="30" width="15" height="12" fill="#8a8078"/><rect x="38" y="10" width="24" height="26" fill="#f4f2ef"/><rect x="40" y="34" width="22" height="25" fill="#e2dbd3"/><ellipse cx="30.5" cy="14.5" rx="7" ry="9.5" fill="#d6ae78"/><ellipse cx="33" cy="18" rx="3.5" ry="7" fill="#b48a5c"/><ellipse cx="25.6" cy="17.5" rx="3.4" ry="5" fill="#cf9f7f"/><path d="M8 41 C11 33 15 26 21 21" fill="none" stroke="#b97f5b" stroke-width="5" stroke-linecap="round"/><path d="M8.5 41 C12 36 16 31 21.5 27" fill="none" stroke="#a66e4c" stroke-width="5" stroke-linecap="round"/><ellipse cx="21.5" cy="21.5" rx="3" ry="2.6" fill="#c48d6a"/><ellipse cx="31" cy="28.6" rx="9" ry="5" fill="#a87050"/><path d="M41 29 C43 36 44 45 44.5 53" fill="none" stroke="#b07a58" stroke-width="5" stroke-linecap="round"/><path d="M20.6 33.4 L38.5 32.2 L39.7 49.5 L21.8 50 Z" fill="#141417"/><path d="M4 43 L21.8 41 L39.7 50 L40 60 L-2 60 Z" fill="#0f0f12"/></g></g></svg>
<div class="t" style="left:609.5px;top:1301.1px;font-size:24.2px;color:#65686c;font-weight:700;">Sofie Alessandro</div>
<div class="t" style="left:609.5px;top:1336.7px;font-size:20.8px;color:#6b6e72;">Trainer</div>
<div class="t" style="left:1238.2px;top:1300.7px;font-size:24.7px;color:#5d6165;">George Bennedict Junior</div>
<div class="t" style="left:1238.2px;top:1333.0px;font-size:25.2px;color:#5d6165;">+374 93 31-10-50</div>
<div class="t" style="left:1587.3px;top:1301.4px;font-size:23.8px;color:#5d6165;">Sat, 27.09, 01:30 pm</div>
<div class="t" style="left:1903.3px;top:1300.9px;font-size:24.4px;color:#5d6165;">Lilit</div>
<div class="t" style="left:1903.3px;top:1337.3px;font-size:20.1px;color:#5d6165;">Fri, 03.10, 07:47 pm</div>
<div class="t" style="left:2182.0px;top:1301.0px;font-size:24.3px;color:#5d6165;">Pending</div>
<div class="t" style="left:2321.8px;top:1300.2px;font-size:25.3px;color:#5d6165;">Web interface for receptionist</div>
<div class="b" style="left:2745.6px;top:1296.3px;width:59.7px;height:51.2px;background:#fff;border:1.5px solid #e3e5e8;border-radius:6px;box-sizing:border-box;"></div>
<svg class="b" style="left:2763px;top:1307.9px" width="26" height="26" viewBox="0 0 26 26"><path d="M17.8 3.2 L22.8 8.2 L20.4 10.6 L15.4 5.6 Z" fill="#6b6e72" stroke="#6b6e72" stroke-width="1.2" stroke-linejoin="round"/><path d="M14.2 6.8 L19.2 11.8 L8.2 22.8 L2.2 24 L3.4 18 Z" fill="#6b6e72"/><path d="M6 19.6 L15.6 10" stroke="#fff" stroke-width="1.2"/><circle cx="5.2" cy="21.2" r="1.4" fill="#fff"/></svg>
<div class="b" style="left:443.9px;top:1377.5px;width:2389.9px;height:28.5px;background:#ffffff;"></div>
<div class="b" style="left:458.0px;top:1399.5px;width:21.5px;height:21.5px;border:2px solid #707377;border-radius:4px;box-sizing:border-box;background:#fff;"></div>
<svg class="b" style="left:523px;top:1392.0px" width="57" height="57" viewBox="0 0 57 57"><defs><clipPath id="c5"><circle cx="28.5" cy="28.5" r="28.5"/></clipPath><filter id="f5" x="-20%" y="-20%" width="140%" height="140%"><feGaussianBlur stdDeviation="0.9"/></filter></defs><g clip-path="url(#c5)"><g filter="url(#f5)"><rect x="-5" y="-5" width="67" height="67" fill="#15161b"/><ellipse cx="26.8" cy="11.5" rx="9.5" ry="6.8" fill="#4f443c"/><ellipse cx="25" cy="9" rx="5" ry="2.6" fill="#786c64"/><ellipse cx="26.8" cy="21.8" rx="7.2" ry="8.8" fill="#d4a88c"/><ellipse cx="23.5" cy="20" rx="1.4" ry="0.8" fill="#3a2a22"/><ellipse cx="30" cy="20" rx="1.4" ry="0.8" fill="#3a2a22"/><path d="M9 20 L11.5 18 L13 25 L15.5 31 L19 31 L18 35 L14 37 L13 43 L9.5 44 L10 34 Z" fill="#dcb9a2"/><path d="M46.5 17 L43.5 15.5 L42.5 23 L39.5 30 L36 30 L37 34 L41 36 L43.5 41 L48 40 L47 31 Z" fill="#dcb9a2"/><path d="M17.8 30.5 L37 29.8 L35 41 L29.5 48.5 L27 49 L21 41 Z" fill="#8a6442"/><path d="M17 31 C22 29 32 28.6 38.5 30" fill="none" stroke="#a87a50" stroke-width="2.2"/><path d="M22 47 L33 46.5 L34 60 L21 60 Z" fill="#f0f0f0"/><path d="M26.2 49.5 L29.4 49.5 L30.4 60 L25.2 60 Z" fill="#15161b"/><path d="M-2 47 C6 44 14 44 21.5 49 L21.5 60 L-2 60 Z" fill="#202128"/><path d="M59 45 C52 42 42 43 33.5 48.5 L33.5 60 L59 60 Z" fill="#202128"/><ellipse cx="47.4" cy="36.4" rx="3.6" ry="2.2" fill="#9c9ca0"/></g></g></svg>
<div class="t" style="left:609.5px;top:1397.5px;font-size:24.2px;color:#65686c;font-weight:700;">Andrew Comrack</div>
<div class="t" style="left:609.5px;top:1433.1px;font-size:20.8px;color:#6b6e72;">Barber</div>
<div class="t" style="left:1587.3px;top:1397.8px;font-size:23.8px;color:#5d6165;">Sat, 27.09, 10:40 am</div>
<div class="t" style="left:1903.3px;top:1397.3px;font-size:24.4px;color:#5d6165;">Lilit</div>
<div class="t" style="left:1903.3px;top:1433.7px;font-size:20.1px;color:#5d6165;">Sat, 27.09, 10:41 am</div>
<div class="t" style="left:2182.0px;top:1397.4px;font-size:24.3px;color:#5d6165;">Pending</div>
<div class="t" style="left:2321.8px;top:1396.6px;font-size:25.3px;color:#5d6165;">Web interface for receptionist</div>
<div class="b" style="left:2745.6px;top:1392.7px;width:59.7px;height:51.2px;background:#fff;border:1.5px solid #e3e5e8;border-radius:6px;box-sizing:border-box;"></div>
<svg class="b" style="left:2763px;top:1404.3px" width="26" height="26" viewBox="0 0 26 26"><path d="M17.8 3.2 L22.8 8.2 L20.4 10.6 L15.4 5.6 Z" fill="#6b6e72" stroke="#6b6e72" stroke-width="1.2" stroke-linejoin="round"/><path d="M14.2 6.8 L19.2 11.8 L8.2 22.8 L2.2 24 L3.4 18 Z" fill="#6b6e72"/><path d="M6 19.6 L15.6 10" stroke="#fff" stroke-width="1.2"/><circle cx="5.2" cy="21.2" r="1.4" fill="#fff"/></svg>
<div class="b" style="left:443.9px;top:991.1px;width:2389.9px;height:1.5px;background:#e8e9ec;"></div>
<div class="b" style="left:443.9px;top:1087.5px;width:2389.9px;height:1.5px;background:#e8e9ec;"></div>
<div class="b" style="left:443.9px;top:1183.9px;width:2389.9px;height:1.5px;background:#e8e9ec;"></div>
<div class="b" style="left:443.9px;top:1280.3px;width:2389.9px;height:1.5px;background:#e8e9ec;"></div>
<div class="b" style="left:443.9px;top:1376.7px;width:2389.9px;height:1.5px;background:#e8e9ec;"></div>
<svg class="b" style="left:0;top:0" width="480" height="760" viewBox="0 0 480 760"><path d="M440.6 515.5 L356 719" stroke="#e5432a" stroke-width="3.6" stroke-linecap="round"/><path d="M350.7 733 L348.6 712.2 L368.4 718.6 Z" fill="#e5432a" stroke="#e5432a" stroke-width="1" stroke-linejoin="round"/></svg>
</body></html>
